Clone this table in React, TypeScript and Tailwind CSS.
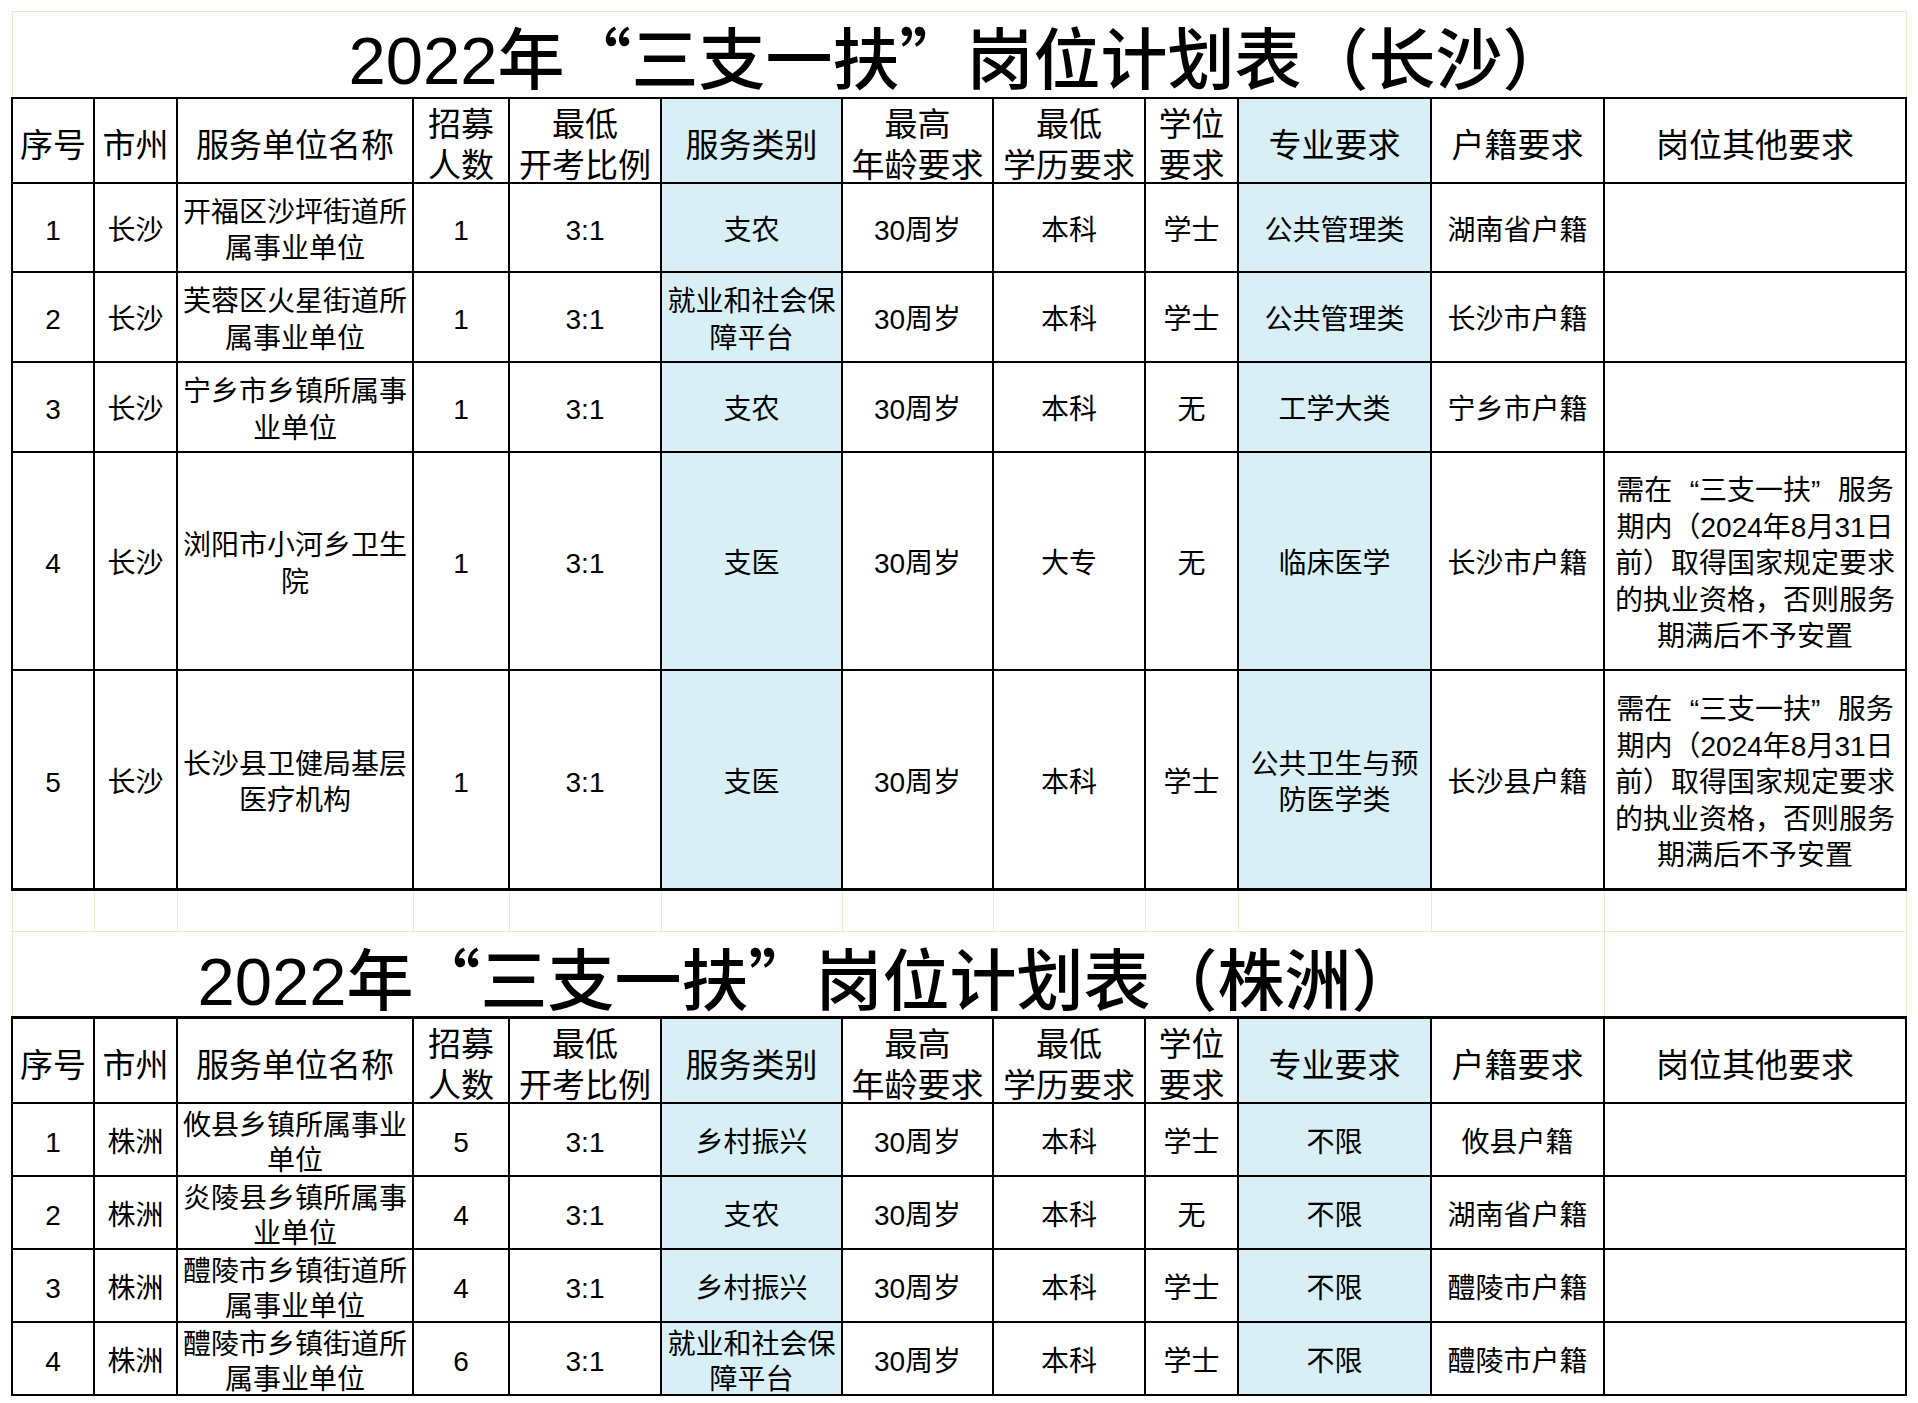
import type { ReactNode } from 'react';

// 服务类别 and 专业要求 columns carry the light blue fill
const BLUE = [5, 9];

const headers = [
  '序号',
  '市州',
  '服务单位名称',
  '招募\n人数',
  '最低\n开考比例',
  '服务类别',
  '最高\n年龄要求',
  '最低\n学历要求',
  '学位\n要求',
  '专业要求',
  '户籍要求',
  '岗位其他要求',
];

const NOTE = '需在“三支一扶”服务\n期内（2024年8月31日\n前）取得国家规定要求\n的执业资格，否则服务\n期满后不予安置';

const changsha = [
  ['1', '长沙', '开福区沙坪街道所\n属事业单位', '1', '3:1', '支农', '30周岁', '本科', '学士', '公共管理类', '湖南省户籍', ''],
  ['2', '长沙', '芙蓉区火星街道所\n属事业单位', '1', '3:1', '就业和社会保\n障平台', '30周岁', '本科', '学士', '公共管理类', '长沙市户籍', ''],
  ['3', '长沙', '宁乡市乡镇所属事\n业单位', '1', '3:1', '支农', '30周岁', '本科', '无', '工学大类', '宁乡市户籍', ''],
  ['4', '长沙', '浏阳市小河乡卫生\n院', '1', '3:1', '支医', '30周岁', '大专', '无', '临床医学', '长沙市户籍', NOTE],
  ['5', '长沙', '长沙县卫健局基层\n医疗机构', '1', '3:1', '支医', '30周岁', '本科', '学士', '公共卫生与预\n防医学类', '长沙县户籍', NOTE],
];
const changshaHeights = ['h-[89px]', 'h-[90px]', 'h-[90px]', 'h-[218px]', 'h-[220px]'];

const zhuzhou = [
  ['1', '株洲', '攸县乡镇所属事业\n单位', '5', '3:1', '乡村振兴', '30周岁', '本科', '学士', '不限', '攸县户籍', ''],
  ['2', '株洲', '炎陵县乡镇所属事\n业单位', '4', '3:1', '支农', '30周岁', '本科', '无', '不限', '湖南省户籍', ''],
  ['3', '株洲', '醴陵市乡镇街道所\n属事业单位', '4', '3:1', '乡村振兴', '30周岁', '本科', '学士', '不限', '醴陵市户籍', ''],
  ['4', '株洲', '醴陵市乡镇街道所\n属事业单位', '6', '3:1', '就业和社会保\n障平台', '30周岁', '本科', '学士', '不限', '醴陵市户籍', ''],
];

// full-width CJK quotes for the big titles
function Cjk({ children }: { children: ReactNode }) {
  return <span className="font-['Noto_Sans_CJK_SC',sans-serif]">{children}</span>;
}

// in body cells the quotes stay in the Latin font, padded out to a full em
function withQuotes(text: string) {
  const parts = text.split(/([“”])/);
  return parts.map((p, i) => {
    if (p === '“') return <span key={i} className="pl-[0.62em]">“</span>;
    if (p === '”') return <span key={i} className="pr-[0.62em]">”</span>;
    return p;
  });
}

function Lines({ text }: { text: string }) {
  return (
    <>
      {text.split('\n').map((line, i) => (
        <div key={i} className="whitespace-nowrap">
          {withQuotes(line)}
        </div>
      ))}
    </>
  );
}

function Title({ place }: { place: string }) {
  return (
    <span className="text-[67px] leading-[67px] font-medium">
      2022年<Cjk>“</Cjk>三支一扶<Cjk>”</Cjk>岗位计划表（{place}）
    </span>
  );
}

function HeaderRow({ thickTop }: { thickTop?: boolean }) {
  return (
    <tr>
      {headers.map((h, i) => (
        <td
          key={i}
          className={`h-[85px] border-2 border-black p-0 text-center align-middle text-[33px] leading-[41px] ${
            BLUE.includes(i) ? 'bg-[#d9eff6]' : ''
          } ${thickTop ? 'border-t-[3px]' : ''}`}
        >
          <div className="translate-y-[5px]">
            <Lines text={h} />
          </div>
        </td>
      ))}
    </tr>
  );
}

function DataRow({
  cells,
  height,
  leading,
  thickBottom,
}: {
  cells: string[];
  height: string;
  leading: string;
  thickBottom?: boolean;
}) {
  return (
    <tr>
      {cells.map((c, i) => (
        <td
          key={i}
          className={`${height} ${leading} border-2 border-black p-0 text-center align-middle text-[28px] ${
            BLUE.includes(i) ? 'bg-[#d9eff6]' : ''
          } ${thickBottom ? 'border-b-[3px]' : ''}`}
        >
          <div className="translate-y-[4px]">
            <Lines text={c} />
          </div>
        </td>
      ))}
    </tr>
  );
}

export default function App() {
  return (
    <div className="min-h-[1403px] bg-white pl-[11px] pt-[11px] text-black font-['Liberation_Sans','Noto_Sans_CJK_SC',sans-serif]">
      <table className="w-[1896px] table-fixed border-collapse">
        <colgroup>
          <col className="w-[82px]" />
          <col className="w-[83px]" />
          <col className="w-[236px]" />
          <col className="w-[96px]" />
          <col className="w-[152px]" />
          <col className="w-[181px]" />
          <col className="w-[151px]" />
          <col className="w-[152px]" />
          <col className="w-[93px]" />
          <col className="w-[193px]" />
          <col className="w-[173px]" />
          <col className="w-[302px]" />
        </colgroup>
        <tbody>
          <tr>
            <td colSpan={12} className="h-[86px] border border-[#f2e6cc] p-0 pt-[6px] text-center align-middle">
              <Title place="长沙" />
            </td>
          </tr>
          <HeaderRow />
          {changsha.map((r, i) => (
            <DataRow
              key={i}
              cells={r}
              height={changshaHeights[i]}
              leading="leading-[36.5px]"
              thickBottom={i === changsha.length - 1}
            />
          ))}
          <tr>
            {headers.map((_, i) => (
              <td key={i} className="h-[42px] border border-[#f2e6cc] p-0" />
            ))}
          </tr>
          <tr>
            <td colSpan={11} className="h-[86px] border border-[#f2e6cc] p-0 pt-[8px] text-center align-middle">
              <Title place="株洲" />
            </td>
            <td className="border border-[#f2e6cc] p-0" />
          </tr>
          <HeaderRow thickTop />
          {zhuzhou.map((r, i) => (
            <DataRow key={i} cells={r} height="h-[73px]" leading="leading-[35.5px]" />
          ))}
        </tbody>
      </table>
    </div>
  );
}
